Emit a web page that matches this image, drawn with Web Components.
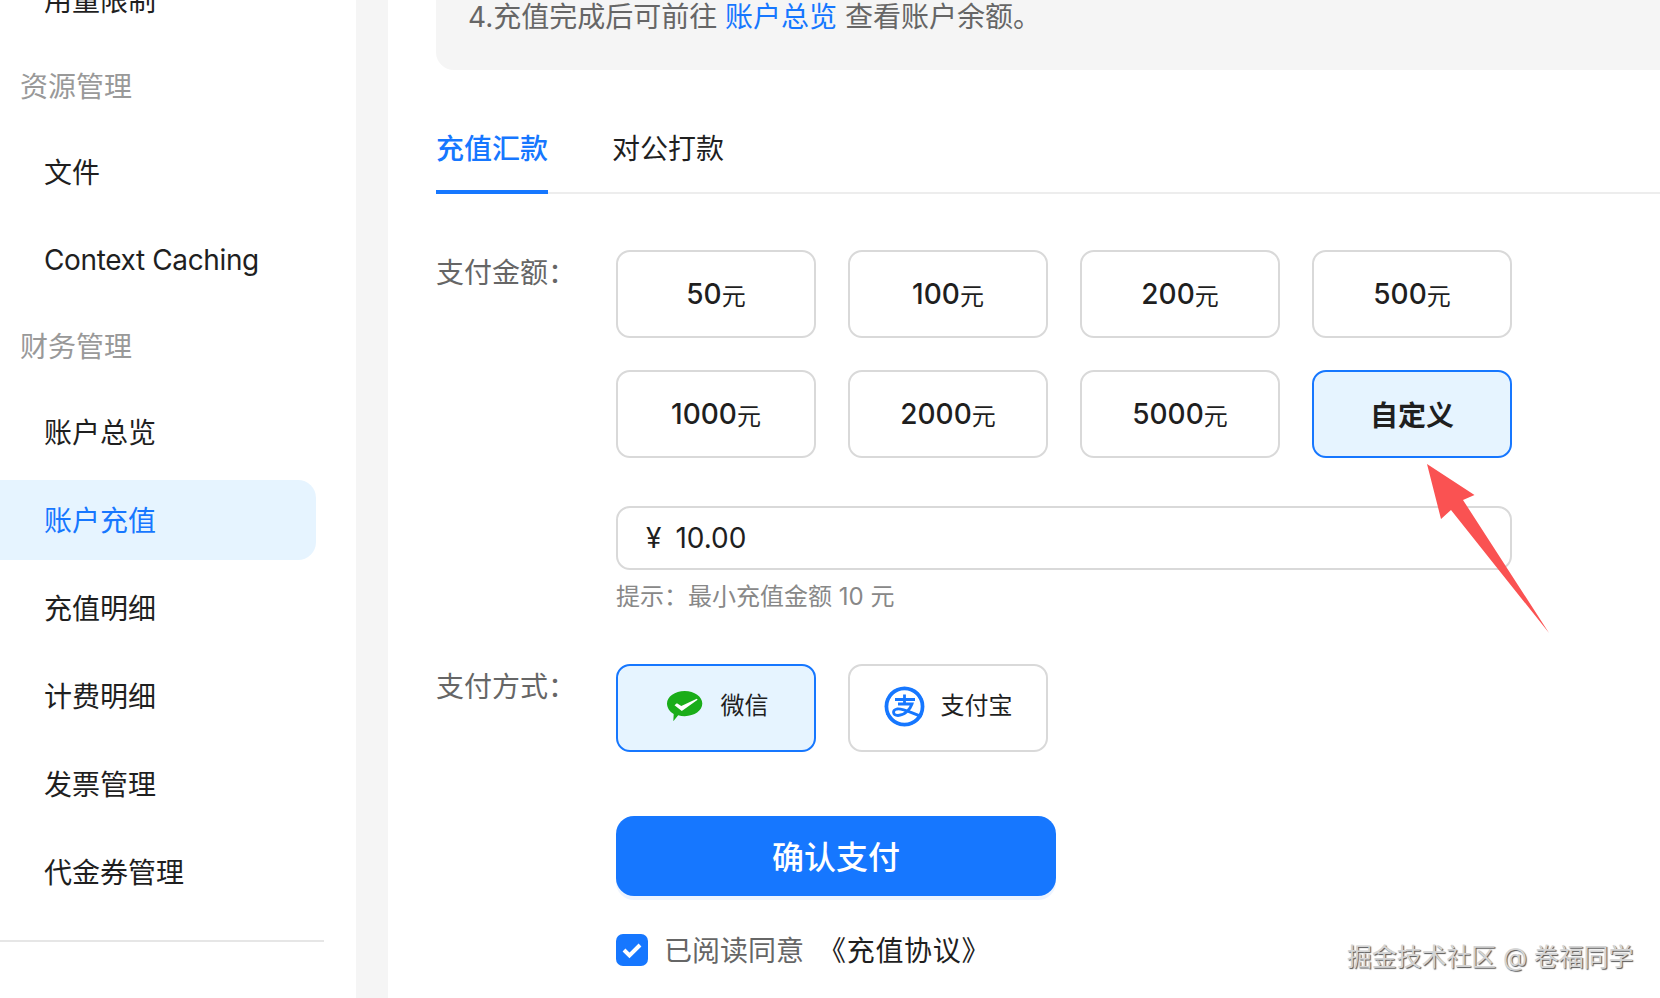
<!DOCTYPE html>
<html lang="zh">
<head>
<meta charset="utf-8">
<title>账户充值</title>
<style>
html,body{margin:0;padding:0;height:100%;background:#fff;overflow:hidden}
body{font-family:Inter,"Noto Sans CJK SC",sans-serif;font-size:28px;color:#1f1f1f}
</style>
</head>
<body>
<x-app>
  <side-nav slot="side">
    <nav-item>用量限制</nav-item>
    <nav-label>资源管理</nav-label>
    <nav-item>文件</nav-item>
    <nav-item latin>Context Caching</nav-item>
    <nav-label>财务管理</nav-label>
    <nav-item>账户总览</nav-item>
    <nav-item active>账户充值</nav-item>
    <nav-item>充值明细</nav-item>
    <nav-item>计费明细</nav-item>
    <nav-item>发票管理</nav-item>
    <nav-item>代金券管理</nav-item>
  </side-nav>
  <info-note>4.充值完成后可前往 <a>账户总览</a> 查看账户余额。</info-note>
  <tab-bar></tab-bar>
  <form-row label="支付金额：">
    <opt-grid>
      <opt-button><b>50</b>元</opt-button>
      <opt-button><b>100</b>元</opt-button>
      <opt-button><b>200</b>元</opt-button>
      <opt-button><b>500</b>元</opt-button>
      <opt-button><b>1000</b>元</opt-button>
      <opt-button><b>2000</b>元</opt-button>
      <opt-button><b>5000</b>元</opt-button>
      <opt-button selected><b style="font-weight:600">自定义</b></opt-button>
    </opt-grid>
    <amount-input value="10.00" hint="提示：最小充值金额 10 元"></amount-input>
  </form-row>
  <form-row label="支付方式：" class="pay">
    <opt-grid>
      <opt-button selected pay gap="18" style="padding-left:3px">
        <svg width="36" height="31" viewBox="0 0 36 31"><path fill="#1aad19" d="M17.7 0C27.5 0 35.300 5.600 35.300 12.600S27.500 25.200 17.700 25.200c-2.300 0-4.500-.3-6.500-.9L6.300 30.300 6.700 23C2.600 20.700 0 16.900 0 12.600 0 5.600 7.900 0 17.700 0Z"/><path fill="#fff" d="M7.500 14.300l2.400-2 4.400 2.700L29.800 7.800l.8.900-15.800 11.300Z"/></svg>
        <span>微信</span>
      </opt-button>
      <opt-button pay gap="16">
        <svg width="41" height="41" viewBox="0 0 41 41"><defs><clipPath id="alc"><circle cx="20.500" cy="20.500" r="20"/></clipPath></defs><g fill="none" stroke="#1677ff" clip-path="url(#alc)"><circle cx="20.500" cy="20.500" r="18.300" stroke-width="4.200"/><path stroke-width="2.800" d="M11 13.500H31M20.500 8.500V18M14 18H28C26 24 20 29.500 14 29.500C8.500 29.500 8 24 13 23C19 22 27 27 39 31"/></g></svg>
        <span>支付宝</span>
      </opt-button>
    </opt-grid>
  </form-row>
  <confirm-button>确认支付</confirm-button>
  <agree-check>已阅读同意<a slot="link">《充值协议》</a></agree-check>
  <callout-arrow></callout-arrow>
  <water-mark>掘金技术社区 @ 卷福同学</water-mark>
</x-app>
<script>
function comp(name, html, init){
  customElements.define(name, class extends HTMLElement{
    constructor(){
      super();
      const root=this.attachShadow({mode:'open'});
      const t=document.createElement('template');
      t.innerHTML=typeof html==='function'?html(this):html;
      root.appendChild(t.content.cloneNode(true));
    }
    connectedCallback(){
      if(init)init(this);
    }
  });
}
comp('x-app',`<style>
:host{display:flex;width:1660px;height:998px;overflow:hidden;position:relative;background:#fff}
.side{flex:0 0 356px;overflow:hidden;background:#fff}
.gutter{flex:0 0 32px;background:#f5f5f5}
.main{flex:1;min-width:0;padding-left:48px;overflow:hidden}
</style>
<div class="side"><slot name="side"></slot></div>
<div class="gutter"></div>
<div class="main"><slot></slot></div>`);
comp('side-nav',`<style>
:host{display:flex;flex-direction:column;gap:8px;margin-top:-40px;width:316px}
.rule{height:2px;width:324px;background:#e6e6e6;margin-top:20px;flex:none}
</style><slot></slot><div class="rule"></div>`);
comp('nav-item',`<style>
:host{display:flex;align-items:center;box-sizing:border-box;height:80px;padding:0 0 2px 44px;border-radius:0 18px 18px 0;color:#1f1f1f;flex:none;font-size:28px;white-space:nowrap}
:host([latin]){padding-bottom:0;letter-spacing:-.37px}
:host([active]){background:#e6f4ff;color:#1677ff}
</style><slot></slot>`);
comp('nav-label',`<style>
:host{display:flex;align-items:center;box-sizing:border-box;height:76px;padding:0 0 2px 20px;color:#999;flex:none;font-size:28px}
</style><slot></slot>`);
comp('info-note',`<style>
:host{display:block;box-sizing:border-box;margin-top:-30px;height:100px;width:1400px;padding:27px 0 0 32px;background:#f5f5f5;border-radius:0 0 18px 18px;color:#666;font-size:28px;line-height:40px;white-space:pre-wrap}
::slotted(a){color:#1677ff}
</style><slot></slot>`);
comp('tab-bar',`<style>
:host{display:flex;gap:64px;margin-top:58px;width:1300px;border-bottom:2px solid #ededed;font-size:28px;line-height:40px;height:66px;box-sizing:border-box}
.t{height:66px;box-sizing:border-box;padding:1px 0 21px}
.on{color:#1677ff;border-bottom:4px solid #1677ff;font-weight:500}
</style><div class="t on">充值汇款</div><div class="t">对公打款</div>`);
comp('form-row',h=>`<style>
:host{display:grid;grid-template-columns:180px 1fr;margin-top:56px}
:host(.pay){margin-top:51px}
.l{color:#666;font-size:28px;line-height:40px;padding-top:3px}
</style><div class="l">${h.getAttribute('label')}</div><div><slot></slot></div>`);
comp('opt-grid',`<style>
:host{display:grid;grid-template-columns:repeat(4,200px);grid-auto-rows:88px;gap:32px}
</style><slot></slot>`);
comp('opt-button',h=>`<style>
:host{display:flex;align-items:center;justify-content:center;box-sizing:border-box;border:2px solid #d9d9d9;border-radius:14px;background:#fff;font-size:24px;color:#1f1f1f;gap:${h.getAttribute('gap')||0}px}
:host([pay]){padding-bottom:4px}
:host([selected]){background:#e6f4ff;border-color:#1677ff}
::slotted(b){font-size:28px;font-weight:500}
::slotted(svg){flex:none}
::slotted(span){margin-bottom:6px}
</style><slot></slot>`);
comp('amount-input',h=>`<style>
:host{display:block;margin-top:48px}
.box{box-sizing:border-box;height:64px;width:896px;border:2px solid #d9d9d9;border-radius:14px;display:flex;align-items:center;padding-left:28px;font-size:28px;color:#1f1f1f;gap:14px}
.hint{margin-top:11px;font-size:24px;line-height:32px;color:#888}
</style><div class="box"><span>¥</span><span>${h.getAttribute('value')}</span></div><div class="hint">${h.getAttribute('hint')}</div>`);
comp('confirm-button',`<style>
:host{display:flex;align-items:center;justify-content:center;box-sizing:border-box;width:440px;height:80px;padding-bottom:2px;margin:64px 0 0 180px;background:#1677ff;border-radius:18px;color:#fff;font-size:32px;font-weight:500;box-shadow:0 4px 0 rgba(22,119,255,.08)}
</style><slot></slot>`);
comp('agree-check',`<style>
:host{display:flex;align-items:center;height:32px;margin:38px 0 0 180px;font-size:28px;color:#666;white-space:nowrap}
.c{width:32px;height:32px;border-radius:7px;background:#1677ff;display:flex;align-items:center;justify-content:center;margin-right:16px;flex:none}
.t{display:flex;align-items:center;margin-top:-3px}
::slotted(a){color:#1f1f1f;margin-left:14px;letter-spacing:.7px}
</style><div class="c"><svg width="22" height="18" viewBox="0 0 22 18"><path d="M3 9l5.500 5.500L19 4" fill="none" stroke="#fff" stroke-width="4"/></svg></div><div class="t"><slot></slot><slot name="link"></slot></div>`);
comp('callout-arrow',`<style>
:host{display:block;position:absolute;left:1420px;top:460px;width:140px;height:180px;pointer-events:none}
</style><svg width="140" height="180" viewBox="1420 460 140 180"><path fill="#fa5252" d="M1427 464L1474.500 495L1463 500L1549 633L1451 510L1441 519Z"/></svg>`);
comp('water-mark',`<style>
:host{display:block;position:absolute;left:1347px;top:941px;font-size:25px;line-height:32px;letter-spacing:-.15px;color:#d4d4d4;white-space:nowrap;text-shadow:1px 1px 1px #555}
</style><slot></slot>`);
</script>
</body>
</html>
